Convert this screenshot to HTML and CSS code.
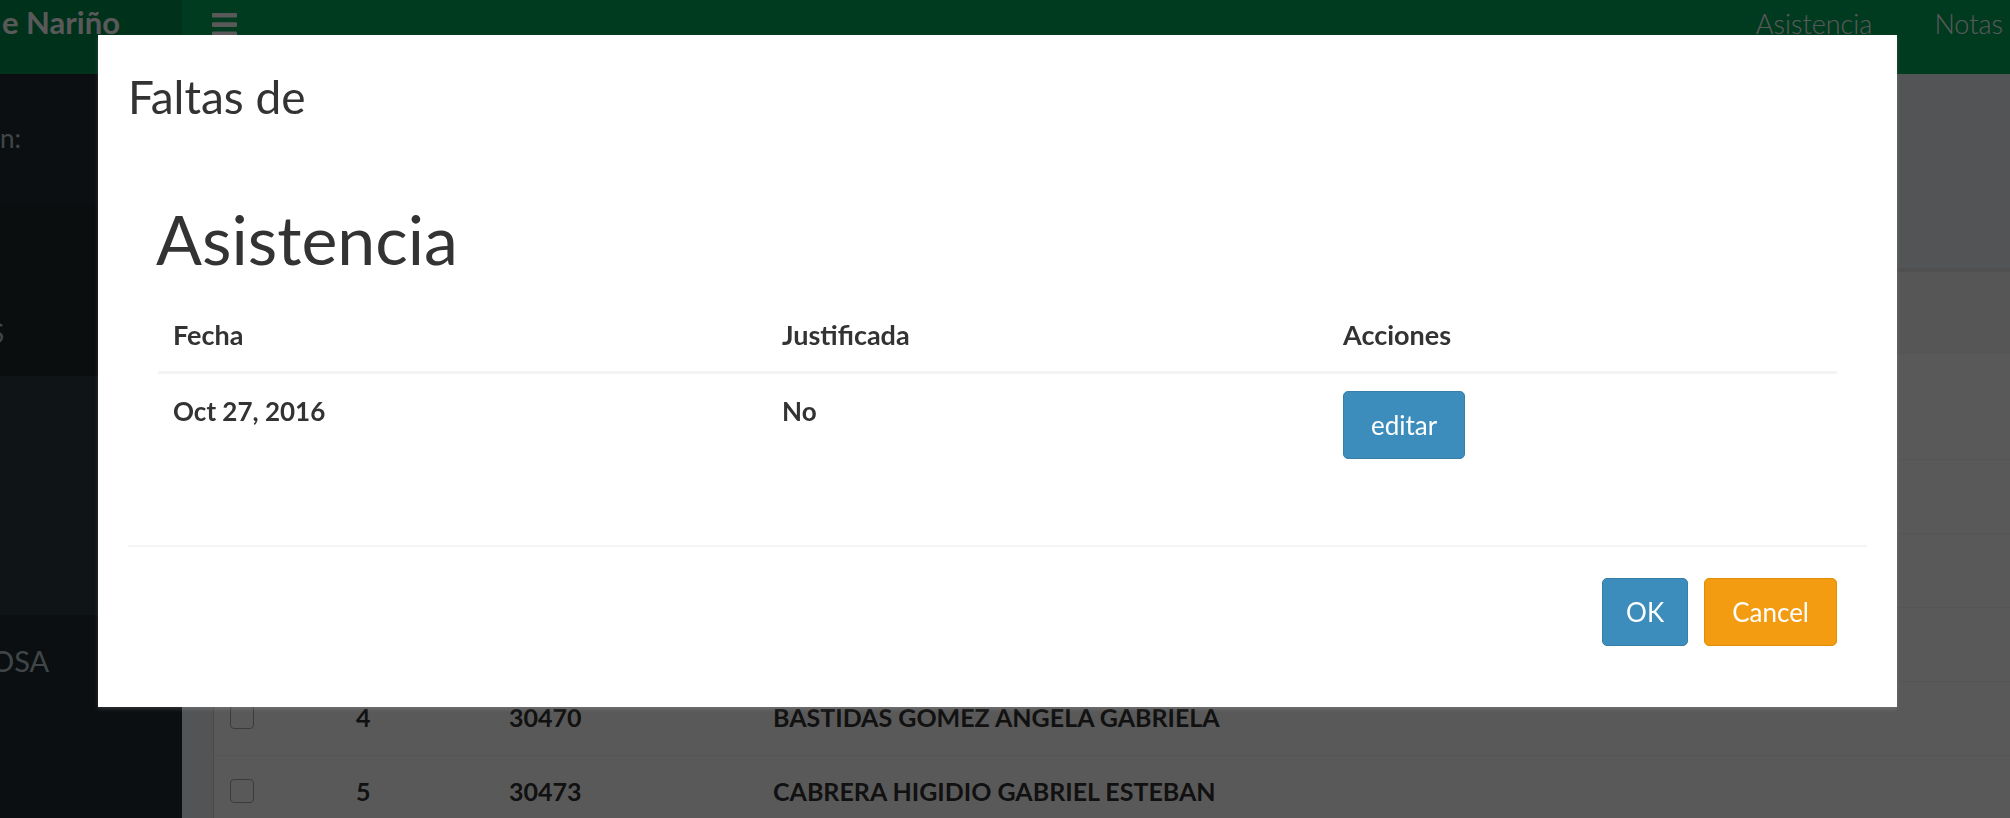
FILE: index.html
```html
<!DOCTYPE html>
<html lang="es">
<head>
<meta charset="utf-8">
<title>Faltas de - Asistencia</title>
<link rel="stylesheet" href="styles.css">
</head>
<body>
<div class="app">
  <header class="topbar">
    <div class="logo"><span class="logo-text">e Nariño</span></div>
    <nav class="navbar">
      <span class="toggle">
        <svg width="25" height="40" viewBox="0 0 25 40"><rect x="0" y="13" width="25" height="4.6" rx="1"/><rect x="0" y="22.3" width="25" height="4.6" rx="1"/><rect x="0" y="31.6" width="25" height="4.6" rx="1"/></svg>
      </span>
      <ul class="nav-links">
        <li>Asistencia</li>
        <li>Notas</li>
      </ul>
    </nav>
  </header>
  <div class="main">
    <aside class="sidebar">
      <div class="user-panel"><span class="side-text">n:</span></div>
      <div class="menu-active"><span class="side-text cut">S</span></div>
      <div class="treeview"></div>
      <div class="menu-item"><span class="side-text cut-o">OSA</span></div>
    </aside>
    <section class="content">
      <div class="box">
        <div class="box-header"></div>
        <table class="list">
          <colgroup><col class="c1"><col class="c2"><col class="c3"><col></colgroup>
          <thead><tr><th></th><th></th><th></th><th></th></tr></thead>
          <tbody>
            <tr><td><span class="check"></span></td><td>1</td><td></td><td></td></tr>
            <tr><td><span class="check"></span></td><td>2</td><td></td><td></td></tr>
            <tr><td><span class="check"></span></td><td>3</td><td></td><td></td></tr>
            <tr><td><span class="check"></span></td><td>4</td><td>30470</td><td>BASTIDAS GOMEZ ANGELA GABRIELA</td></tr>
            <tr><td><span class="check"></span></td><td>5</td><td>30473</td><td>CABRERA HIGIDIO GABRIEL ESTEBAN</td></tr>
          </tbody>
        </table>
      </div>
    </section>
  </div>
</div>
<div class="backdrop"></div>
<div class="modal">
  <div class="modal-header">
    <h4 class="modal-title">Faltas de</h4>
  </div>
  <div class="modal-body">
    <h1 class="section-title">Asistencia</h1>
    <table class="faltas">
      <colgroup><col class="f1"><col class="f2"><col class="f3"></colgroup>
      <thead>
        <tr><th>Fecha</th><th>Justificada</th><th>Acciones</th></tr>
      </thead>
      <tbody>
        <tr><td>Oct 27, 2016</td><td>No</td><td><button class="btn btn-primary">editar</button></td></tr>
      </tbody>
    </table>
  </div>
  <div class="modal-footer">
    <button class="btn btn-primary btn-ok">OK</button>
    <button class="btn btn-warning">Cancel</button>
  </div>
</div>
</body>
</html>
```
FILE: styles.css
```css
* { box-sizing: border-box; }
html, body { margin: 0; padding: 0; }
body {
  width: 2010px;
  height: 818px;
  overflow: hidden;
  font-family: Lato, "Open Sans", sans-serif;
  color: #333;
  background: #ecf0f5;
}

.app {
  display: grid;
  grid-template-columns: 2010px;
  grid-template-rows: 74px 744px;
  height: 818px;
}

/* top bar */
.topbar { display: flex; height: 74px; min-width: 0; }
.logo {
  width: 182px;
  flex-shrink: 0;
  background: #008d4c;
  overflow: hidden;
  display: flex;
  justify-content: flex-end;
  padding: 4px 62px 0 0;
}
.logo-text {
  flex-shrink: 0;
  white-space: nowrap;
  color: #fff;
  font-weight: 700;
  font-size: 31px;
  line-height: 36px;
}
.navbar {
  flex: 1;
  min-width: 0;
  background: #00a65a;
  display: flex;
  align-items: flex-start;
}
.toggle { display: block; margin-left: 30px; height: 40px; }
.toggle svg { display: block; fill: #fff; }
.nav-links {
  list-style: none;
  margin: 0 0 0 auto;
  padding: 8px 7px 0 0;
  display: flex;
  gap: 62px;
  color: #fff;
  font-size: 27px;
  font-weight: 300;
  line-height: 32px;
}

/* sidebar */
.main { display: flex; min-width: 0; }
.sidebar {
  width: 182px;
  flex-shrink: 0;
  background: #222d32;
  display: flex;
  flex-direction: column;
  overflow: hidden;
}
.side-text {
  display: block;
  color: #b8c7ce;
  font-size: 26px;
  line-height: 32px;
  white-space: nowrap;
}
.user-panel { height: 129px; padding-top: 48px; }
.menu-active { height: 173px; background: #1e282c; padding-top: 114px; }
.cut { margin-left: -10px; }
.treeview { height: 239px; background: #2c3b41; }
.menu-item { flex: 1; padding-top: 30px; }
.cut-o { margin-left: -9px; font-size: 29px; }

/* content */
.content {
  flex: 1;
  min-width: 0;
  background: #ecf0f5;
  padding: 194px 0 0 31px;
  overflow: hidden;
}
.box {
  background: #fff;
  border-top: 4px solid #e4e4e4;
  border-left: 1px solid #d2d6de;
}
.box-header { height: 80px; background: #f6f6f6; }
.list {
  width: 100%;
  border-collapse: collapse;
  table-layout: fixed;
  font-weight: 700;
  font-size: 25px;
  color: #333;
}
.list .c1 { width: 127px; }
.list .c2 { width: 153px; }
.list .c3 { width: 264px; }
.list thead tr { height: 106px; border-top: 2px solid #f4f4f4; }
.list tbody tr { height: 74px; border-top: 1px solid #f4f4f4; }
.list td { padding: 0 15px 3px; vertical-align: middle; white-space: nowrap; }
.list td:first-child { padding-left: 16px; }
.check {
  display: block;
  width: 24px;
  height: 24px;
  border: 1px solid #aaa;
  border-radius: 4px;
  background: #fff;
}

/* modal */
.backdrop {
  position: fixed;
  inset: 0;
  background: rgba(0, 0, 0, 0.65);
}
.modal {
  position: absolute;
  left: 98px;
  top: 35px;
  width: 1799px;
  height: 672px;
  background: #fff;
  box-shadow: 0 2px 4px rgba(255, 255, 255, 0.15);
  display: flex;
  flex-direction: column;
}
.modal-header { padding: 36px 30px 0; }
.modal-title {
  margin: 0;
  font-size: 46px;
  font-weight: 400;
  line-height: 52px;
  color: #333;
}
.modal-body { padding: 74px 60px 69px; }
.section-title {
  margin: 0 0 18px -2px;
  font-size: 68px;
  font-weight: 400;
  line-height: 84px;
  color: #333;
}
.faltas {
  width: 100%;
  border-collapse: collapse;
  table-layout: fixed;
  font-size: 26px;
  font-weight: 700;
  color: #333;
}
.faltas .f1 { width: 609px; }
.faltas .f2 { width: 561px; }
.faltas th {
  text-align: left;
  padding: 16px 15px;
  font-size: 27px;
  line-height: 40px;
  border-bottom: 3px solid #f4f4f4;
}
.faltas td {
  padding: 17px 15px;
  line-height: 40px;
  vertical-align: top;
}
.modal-footer {
  margin: 0 30px;
  border-top: 2px solid #f4f4f4;
  padding: 31px 30px 60px 0;
  display: flex;
  justify-content: flex-end;
  gap: 16px;
}
.btn {
  font-family: Lato, "Open Sans", sans-serif;
  font-size: 26px;
  font-weight: 400;
  color: #fff;
  height: 68px;
  padding: 0 27px;
  border-radius: 5px;
  border: 1px solid transparent;
  line-height: 66px;
  display: inline-block;
  vertical-align: top;
}
.btn-primary { background: #3c8dbc; border-color: #367fa9; }
.btn-warning { background: #f39c12; border-color: #e08e0b; }
.modal-footer .btn-ok { padding: 0 23px; }
.modal-footer .btn-warning { padding: 0 27px; }
```
